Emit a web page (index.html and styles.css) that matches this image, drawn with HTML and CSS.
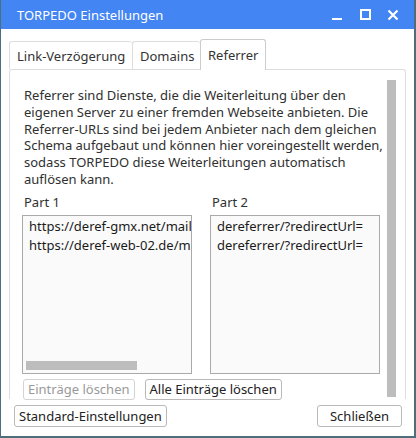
FILE: index.html
```html
<!DOCTYPE html>
<html>
<head>
<meta charset="utf-8">
<link rel="stylesheet" href="styles.css">
</head>
<body>
<div class="window">
  <div class="titlebar">
    <span class="title">TORPEDO Einstellungen</span>
    <div class="controls">
      <svg class="ctl" width="12" height="12" viewBox="0 0 12 12"><rect x="1" y="9" width="10" height="2" fill="#fff"/></svg>
      <svg class="ctl" width="12" height="12" viewBox="0 0 12 12"><rect x="2" y="1" width="9" height="9" fill="none" stroke="#fff" stroke-width="2"/></svg>
      <svg class="ctl" width="12" height="12" viewBox="0 0 12 12"><path d="M1.5 1.5 L10.5 10.5 M10.5 1.5 L1.5 10.5" stroke="#fff" stroke-width="2.2"/></svg>
    </div>
  </div>
  <div class="body">
    <div class="tabs">
      <div class="tab">Link-Verzögerung</div>
      <div class="tab">Domains</div>
      <div class="tab active">Referrer</div>
    </div>
    <div class="panel">
      <div class="content">
        <p class="desc">Referrer sind Dienste, die die Weiterleitung über den eigenen Server zu einer fremden Webseite anbieten. Die Referrer-URLs sind bei jedem Anbieter nach dem gleichen Schema aufgebaut und können hier voreingestellt werden, sodass TORPEDO diese Weiterleitungen automatisch auflösen kann.</p>
        <div class="lists">
          <div class="col">
            <div class="label">Part 1</div>
            <div class="listbox">
              <div class="item">https://deref-gmx.net/mail/client/dereferrer/?redirectUrl=</div>
              <div class="item">https://deref-web-02.de/mail/client/dereferrer/?redirectUrl=</div>
              <div class="hscroll"></div>
            </div>
          </div>
          <div class="col">
            <div class="label">Part 2</div>
            <div class="listbox">
              <div class="item">dereferrer/?redirectUrl=</div>
              <div class="item">dereferrer/?redirectUrl=</div>
            </div>
          </div>
        </div>
        <div class="actions">
          <button class="btn disabled">Einträge löschen</button>
          <button class="btn">Alle Einträge löschen</button>
        </div>
      </div>
      <div class="vscroll"></div>
    </div>
    <div class="footer">
      <button class="btn">Standard-Einstellungen</button>
      <button class="btn close">Schließen</button>
    </div>
  </div>
</div>
</body>
</html>
```
FILE: styles.css
```css
* { box-sizing: border-box; }
html, body { margin: 0; padding: 0; }
body {
  width: 416px;
  height: 438px;
  font-family: "Noto Sans", Roboto, sans-serif;
  font-size: 13px;
  color: #303030;
  background: #4e6e7c;
}
.window {
  width: 416px;
  height: 438px;
  border-left: 1px solid #4e6e7c;
  border-right: 2px solid #4e6e7c;
  border-bottom: 2px solid #4e6e7c;
  background: #fff;
  display: flex;
  flex-direction: column;
}
.titlebar {
  height: 29px;
  background: #4385f3;
  display: flex;
  align-items: center;
  padding-left: 16px;
  color: #fff;
  flex: none;
}
.title {
  font-size: 13px;
  flex: 1;
}
.controls {
  display: flex;
  gap: 16px;
  padding-right: 15px;
  padding-top: 1px;
}
.ctl { display: block; }
.body {
  flex: 1;
  display: flex;
  flex-direction: column;
  padding: 9px 8px 0 8px;
  min-height: 0;
}
.tabs {
  display: flex;
  align-items: flex-end;
  height: 31px;
  flex: none;
}
.tab {
  height: 28px;
  padding: 0 7px;
  border: 1px solid #ddd;
  border-bottom: none;
  border-right: none;
  border-radius: 3px 3px 0 0;
  display: flex;
  align-items: center;
  font-size: 13px;
  color: #333;
  background: #fff;
  white-space: nowrap;
}
.tab.active {
  height: 31px;
  border: 1px solid #ccc;
  border-bottom: none;
  padding: 0 7px;
  position: relative;
  top: 1px;
  background: #fff;
}
.tab:nth-child(1) { width: 123px; }
.tab:nth-child(2) { width: 68px; }
.tab:nth-child(3) { width: 66px; }
.panel {
  height: 330px;
  border: 1px solid #ddd;
  border-bottom: none;
  border-radius: 3px 3px 0 0;
  display: flex;
  padding: 10px 9px 0 12px;
  flex: none;
}
.content {
  flex: 1;
  min-width: 0;
}
.desc {
  margin: 0;
  line-height: 16.8px;
  padding-top: 7px;
  padding-left: 2px;
}
.lists {
  display: flex;
  gap: 18px;
  margin-top: 6px;
}
.col {
  width: 170px;
}
.label {
  height: 17px;
  line-height: 17px;
  padding-left: 2px;
  margin-bottom: 4px;
}
.listbox {
  height: 159px;
  border: 1px solid #aaa;
  background: #fafafa;
  overflow: hidden;
  position: relative;
  padding-top: 1px;
}
.item {
  white-space: nowrap;
  overflow: hidden;
  padding-left: 6px;
  height: 19.5px;
  line-height: 19.5px;
  color: #1a1a1a;
}
.hscroll {
  position: absolute;
  left: 3px;
  bottom: 3px;
  width: 111px;
  height: 9px;
  background: #bdbdbd;
}
.actions {
  display: flex;
  gap: 10px;
  margin-top: 5px;
  padding-left: 1px;
}
.btn {
  font-family: "Noto Sans", Roboto, sans-serif;
  font-size: 13px;
  color: #222;
  background: #fff;
  border: 1px solid #b9b9b9;
  border-radius: 3px;
  height: 21px;
  padding: 0 4px;
  margin: 0;
  line-height: 19px;
  white-space: nowrap;
}
.btn.disabled {
  color: #999;
  border-color: #d3d3d3;
}
.vscroll {
  width: 9px;
  height: 317px;
  background: #bdbdbd;
  flex: none;
}
.footer {
  display: flex;
  justify-content: space-between;
  padding: 6px 4px 0 5px;
}
.footer .btn { height: 22px; }
.footer .close { width: 85px; }
```
